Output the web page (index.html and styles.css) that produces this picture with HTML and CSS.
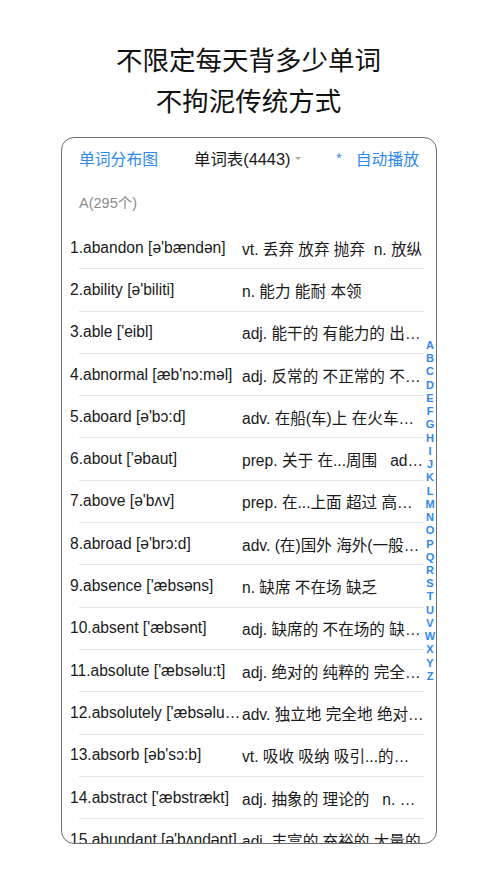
FILE: index.html
```html
<!DOCTYPE html>
<html lang="zh">
<head>
<meta charset="utf-8">
<link rel="stylesheet" href="styles.css">
</head>
<body>
<div class="title">
  <div>不限定每天背多少单词</div>
  <div>不拘泥传统方式</div>
</div>
<div class="card">
  <div class="header">
    <span class="link">单词分布图</span>
    <span class="middle">单词表(4443)<span class="tri"></span></span>
    <span class="star">*</span>
    <span class="link">自动播放</span>
  </div>
  <div class="section">A(295个)</div>
  <div class="list">
    <div class="row"><span class="word">1.abandon [ə'bændən]</span><span class="mean">vt. 丢弃 放弃 抛弃&nbsp; n. 放纵</span></div>
    <div class="row"><span class="word">2.ability [ə'biliti]</span><span class="mean">n. 能力 能耐 本领</span></div>
    <div class="row"><span class="word">3.able ['eibl]</span><span class="mean">adj. 能干的 有能力的 出众的</span></div>
    <div class="row"><span class="word">4.abnormal [æb'nɔ:məl]</span><span class="mean">adj. 反常的 不正常的 不规则的</span></div>
    <div class="row"><span class="word">5.aboard [ə'bɔ:d]</span><span class="mean">adv. 在船(车)上 在火车上 在飞机上</span></div>
    <div class="row"><span class="word">6.about ['əbaut]</span><span class="mean">prep. 关于 在...周围&nbsp;&nbsp; adj. 在附近的</span></div>
    <div class="row"><span class="word">7.above [ə'bʌv]</span><span class="mean">prep. 在...上面 超过 高于 多于</span></div>
    <div class="row"><span class="word">8.abroad [ə'brɔ:d]</span><span class="mean">adv. (在)国外 海外(一般指)</span></div>
    <div class="row"><span class="word">9.absence ['æbsəns]</span><span class="mean">n. 缺席 不在场 缺乏</span></div>
    <div class="row"><span class="word">10.absent ['æbsənt]</span><span class="mean">adj. 缺席的 不在场的 缺乏的</span></div>
    <div class="row"><span class="word">11.absolute ['æbsəlu:t]</span><span class="mean">adj. 绝对的 纯粹的 完全的 无条件的</span></div>
    <div class="row"><span class="word">12.absolutely ['æbsəlu:tli]</span><span class="mean">adv. 独立地 完全地 绝对地 非常</span></div>
    <div class="row"><span class="word">13.absorb [əb'sɔ:b]</span><span class="mean">vt. 吸收 吸纳 吸引...的注意</span></div>
    <div class="row"><span class="word">14.abstract ['æbstrækt]</span><span class="mean">adj. 抽象的 理论的&nbsp;&nbsp; n. 摘要</span></div>
    <div class="row"><span class="word">15.abundant [ə'bʌndənt]</span><span class="mean">adj. 丰富的 充裕的 大量的</span></div>
  </div>
  <div class="index">
    <span>A</span><span>B</span><span>C</span><span>D</span><span>E</span><span>F</span><span>G</span><span>H</span><span>I</span><span>J</span><span>K</span><span>L</span><span>M</span><span>N</span><span>O</span><span>P</span><span>Q</span><span>R</span><span>S</span><span>T</span><span>U</span><span>V</span><span>W</span><span>X</span><span>Y</span><span>Z</span>
  </div>
</div>
</body>
</html>
```
FILE: styles.css
```css
html, body {
  margin: 0;
  padding: 0;
  background: #fff;
}
body {
  font-family: "Liberation Sans", "Noto Sans CJK SC", sans-serif;
  color: #1a1a1a;
}
.title {
  padding-top: 38px;
  text-align: center;
  font-size: 26.5px;
  line-height: 41px;
  color: #111;
  font-family: "Noto Sans CJK SC", sans-serif;
}
.card {
  position: relative;
  box-sizing: border-box;
  margin: 17px 0 0 61px;
  width: 376px;
  height: 707px;
  border: 1px solid #6e6e6e;
  border-radius: 13px;
  overflow: hidden;
}
.header {
  display: flex;
  align-items: center;
  height: 40px;
  padding: 0 17px 0 17px;
  font-size: 15.8px;
}
.link {
  color: #2e88ee;
}
.middle {
  margin-left: 36px;
  color: #1a1a1a;
  display: flex;
  align-items: center;
  font-size: 16.4px;
}
.tri {
  display: inline-block;
  margin-left: 4px;
  width: 0;
  height: 0;
  border-left: 3px solid transparent;
  border-right: 3px solid transparent;
  border-top: 3px solid #a8a8a8;
}
.star {
  margin-left: auto;
  margin-right: 14px;
  color: #2e88ee;
  font-size: 14px;
}
.section {
  padding: 17px 0 0 17px;
  height: 30px;
  box-sizing: border-box;
  font-size: 14.5px;
  color: #8c8c8c;
  line-height: 16px;
}
.list {
  margin-top: 19px;
}
.row {
  display: flex;
  align-items: center;
  height: 42.3px;
  box-sizing: border-box;
  margin-left: 17px;
  margin-right: 12px;
  border-bottom: 1px solid #e6e6e6;
  font-size: 15.6px;
  white-space: nowrap;
}
.word {
  width: 172px;
  margin-left: -9px;
  overflow: hidden;
  text-overflow: ellipsis;
  flex: none;
}
.mean {
  width: 182px;
  overflow: hidden;
  text-overflow: ellipsis;
  flex: none;
}
.index {
  position: absolute;
  right: 0;
  top: 201px;
  width: 12px;
  display: flex;
  flex-direction: column;
  align-items: center;
  font-size: 11px;
  font-weight: bold;
  color: #2e88ee;
  line-height: 13.24px;
}
```
